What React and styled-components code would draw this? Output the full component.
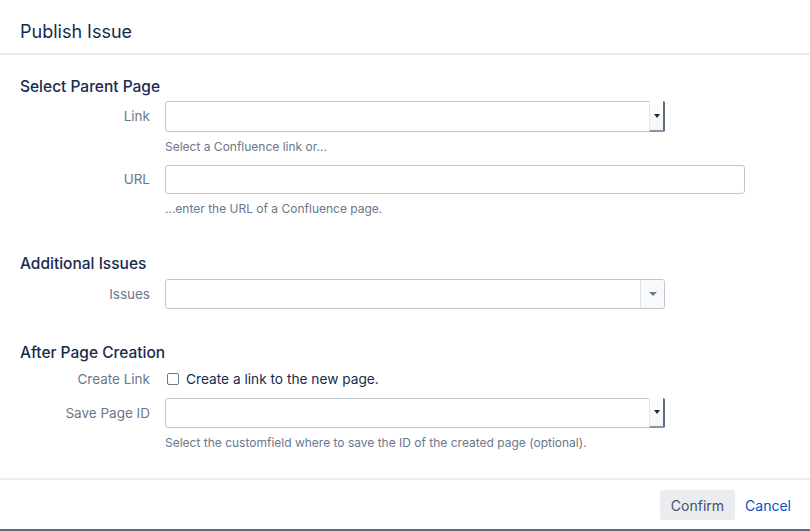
import styled, { createGlobalStyle } from 'styled-components';

const GlobalStyle = createGlobalStyle`
  html, body {
    margin: 0;
    padding: 0;
    background: #5e6c84;
  }
  body {
    font-family: Inter, "Noto Sans", "Liberation Sans", sans-serif;
    -webkit-font-smoothing: antialiased;
  }
`;

const Dialog = styled.div`
  width: 810px;
  height: 529px;
  background: #fff;
  display: flex;
  flex-direction: column;
  box-sizing: border-box;
`;

const Header = styled.div`
  height: 53px;
  border-bottom: 2px solid #ebecf0;
  display: flex;
  align-items: center;
  padding: 0 20px;
  box-sizing: content-box;
  h2 {
    margin: 0;
    font-size: 18px;
    font-weight: 400;
    color: #172b4d;
    padding-top: 9px;
  }
`;

const Content = styled.div`
  flex: 1;
  padding: 23px 20px 0;
`;

const Section = styled.div`
  margin-bottom: ${p => p.gap || 0}px;
`;

const SectionTitle = styled.h3`
  margin: 0 0 ${p => p.$mb || 5}px;
  font-size: 15.5px;
  font-weight: 500;
  color: #172b4d;
  line-height: 18px;
`;

const Row = styled.div`
  display: grid;
  grid-template-columns: 130px 1fr;
  column-gap: 15px;
  margin-bottom: ${p => p.mb || 0}px;
`;

const Label = styled.label`
  text-align: right;
  font-size: 13.5px;
  color: #6b778c;
  line-height: ${p => p.lh || 31}px;
`;

const Field = styled.div`
  display: flex;
  flex-direction: column;
`;

const Box = styled.div`
  width: ${p => p.w}px;
  height: ${p => p.h || 31}px;
  border: 1px solid #c1c7d0;
  border-radius: 3px;
  box-sizing: border-box;
  background: #fff;
  display: flex;
  justify-content: flex-end;
`;

const NativeArrow = styled.div`
  width: 13px;
  height: 100%;
  border-left: 1px solid #e4e6ea;
  border-right: 2px solid #5e6c84;
  border-bottom: 2px solid #8993a4;
  border-radius: 0 2px 2px 0;
  margin: -1px -1px -1px 0;
  background: linear-gradient(#fff, #f4f5f7);
  display: flex;
  align-items: center;
  justify-content: center;
  &::after {
    content: '';
    border-left: 3px solid transparent;
    border-right: 3px solid transparent;
    border-top: 4px solid #172b4d;
  }
`;

const Select2Arrow = styled.div`
  width: 23px;
  border-left: 1px solid #dfe1e6;
  background: #f8f9fa;
  border-radius: 0 3px 3px 0;
  display: flex;
  align-items: center;
  justify-content: center;
  &::after {
    content: '';
    border-left: 4px solid transparent;
    border-right: 4px solid transparent;
    border-top: 4px solid #6b778c;
  }
`;

const Help = styled.div`
  font-size: 12px;
  color: #6b778c;
  margin-top: 7px;
  line-height: 16px;
`;

const CheckRow = styled.div`
  display: flex;
  align-items: center;
  gap: 7px;
  height: 24px;
  font-size: 13.7px;
  color: #172b4d;
  span.box {
    width: 10px;
    height: 10px;
    border: 1px solid #6b778c;
    border-radius: 2px;
    margin-left: 2px;
    background: #fff;
  }
`;

const Footer = styled.div`
  border-top: 2px solid #ebecf0;
  height: 51px;
  display: flex;
  align-items: center;
  justify-content: flex-end;
  gap: 10px;
  padding: 1px 19px 0 0;
  box-sizing: border-box;
`;

const Button = styled.button`
  font-family: inherit;
  font-size: 14px;
  border: none;
  border-radius: 3px;
  height: 30px;
  background: ${p => (p.link ? 'transparent' : '#ebecf0')};
  color: ${p => (p.link ? '#0052cc' : '#42526e')};
  padding: ${p => (p.link ? '0' : '0 11px')};
`;

export default function App() {
  return (
    <>
      <GlobalStyle />
      <Dialog>
        <Header>
          <h2>Publish Issue</h2>
        </Header>
        <Content>
          <Section gap={38}>
            <SectionTitle>Select Parent Page</SectionTitle>
            <Row mb={10}>
              <Label>Link</Label>
              <Field>
                <Box w={500}>
                  <NativeArrow />
                </Box>
                <Help>Select a Confluence link or...</Help>
              </Field>
            </Row>
            <Row>
              <Label lh={29}>URL</Label>
              <Field>
                <Box w={580} h={29} />
                <Help>...enter the URL of a Confluence page.</Help>
              </Field>
            </Row>
          </Section>
          <Section gap={35}>
            <SectionTitle $mb={6}>Additional Issues</SectionTitle>
            <Row>
              <Label lh={30}>Issues</Label>
              <Field>
                <Box w={500} h={30}>
                  <Select2Arrow />
                </Box>
              </Field>
            </Row>
          </Section>
          <Section>
            <SectionTitle>After Page Creation</SectionTitle>
            <Row mb={7}>
              <Label lh={24}>Create Link</Label>
              <CheckRow>
                <span className="box" />
                Create a link to the new page.
              </CheckRow>
            </Row>
            <Row>
              <Label lh={30}>Save Page ID</Label>
              <Field>
                <Box w={500} h={30}>
                  <NativeArrow />
                </Box>
                <Help>Select the customfield where to save the ID of the created page (optional).</Help>
              </Field>
            </Row>
          </Section>
        </Content>
        <Footer>
          <Button>Confirm</Button>
          <Button link>Cancel</Button>
        </Footer>
      </Dialog>
    </>
  );
}
